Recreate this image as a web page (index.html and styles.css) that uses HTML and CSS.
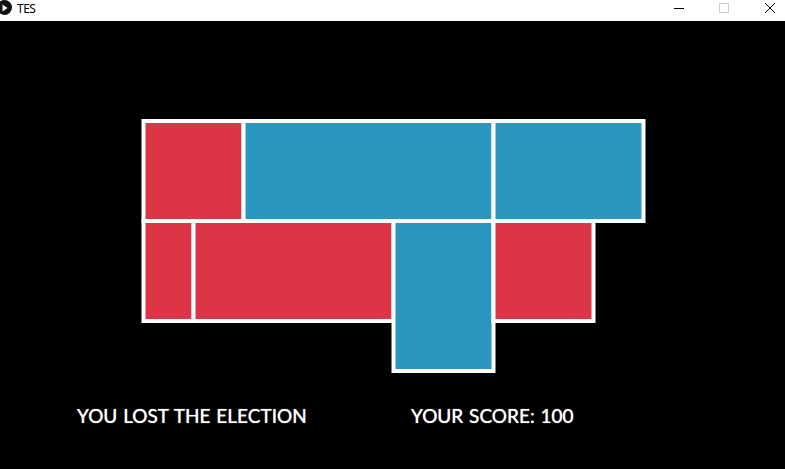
FILE: index.html
```html
<!DOCTYPE html>
<html lang="en">
<head>
  <meta charset="UTF-8" />
  <title>TES</title>
  <link rel="stylesheet" href="styles.css">
</head>
<body>

  <div class="titlebar">
    <div class="title">
      <svg class="app-icon" width="14" height="16" viewBox="0 0 14 16">
        <circle cx="4.5" cy="7.5" r="7.5" fill="#111"/>
        <path d="M2.5 4.5 L7.5 8 L2.5 11.5 Z" fill="#fff"/>
      </svg>
      <span>TES</span>
    </div>
    <div class="controls">
      <svg width="10" height="16" viewBox="0 0 10 16">
        <path d="M0 8.5 H10" stroke="#000" stroke-width="1"/>
      </svg>
      <svg width="10" height="16" viewBox="0 0 10 16">
        <rect x="0.5" y="3.5" width="9" height="9" fill="none" stroke="#ccc"/>
      </svg>
      <svg class="close" width="10" height="16" viewBox="0 0 10 16">
        <path d="M0 3 L10 13 M10 3 L0 13" stroke="#000" stroke-width="1"/>
      </svg>
    </div>
  </div>

  <main class="game">
    <svg class="board" width="785" height="370" viewBox="0 21 785 370">
      <g stroke="#fff" stroke-width="4">
        <rect class="red" x="143.5" y="121" width="100" height="100"/>
        <rect class="blue" x="243.5" y="121" width="250" height="100"/>
        <rect class="blue" x="493.5" y="121" width="150" height="100"/>
        <rect class="red" x="143.5" y="221" width="50" height="100"/>
        <rect class="red" x="193.5" y="221" width="200" height="100"/>
        <rect class="blue" x="393.5" y="221" width="100" height="150"/>
        <rect class="red" x="493.5" y="221" width="100" height="100"/>
      </g>
    </svg>

    <div class="status">
      <span class="result">YOU LOST THE ELECTION</span>
      <span class="score">YOUR SCORE: 100</span>
    </div>
  </main>

</body>
</html>
```

FILE: styles.css
```css
html, body {
  margin: 0;
  height: 100%;
  overflow: hidden;
  background: #000;
}

.titlebar {
  display: flex;
  justify-content: space-between;
  height: 21px;
  background: #fff;
}

.title {
  display: flex;
  align-items: center;
  gap: 3px;
  height: 16px;
  font-family: 'Noto Sans', sans-serif;
  font-size: 12px;
  letter-spacing: -0.5px;
  color: #000;
}

.app-icon {
  display: block;
}

.controls {
  display: flex;
  gap: 35px;
  padding-right: 10px;
}

.controls svg {
  display: block;
}

.close {
  margin-left: 1px;
}

.board {
  display: block;
}

.red {
  fill: #dc3545;
}

.blue {
  fill: #2b96c0;
}

.status {
  display: flex;
  padding: 13px 0 0 77px;
  font-family: 'Lato', sans-serif;
  font-size: 19px;
  line-height: 24px;
  color: #fff;
  text-shadow: 0 0 1px #fff;
  word-spacing: 1px;
}

.result {
  width: 334px;
  flex: none;
}
```
